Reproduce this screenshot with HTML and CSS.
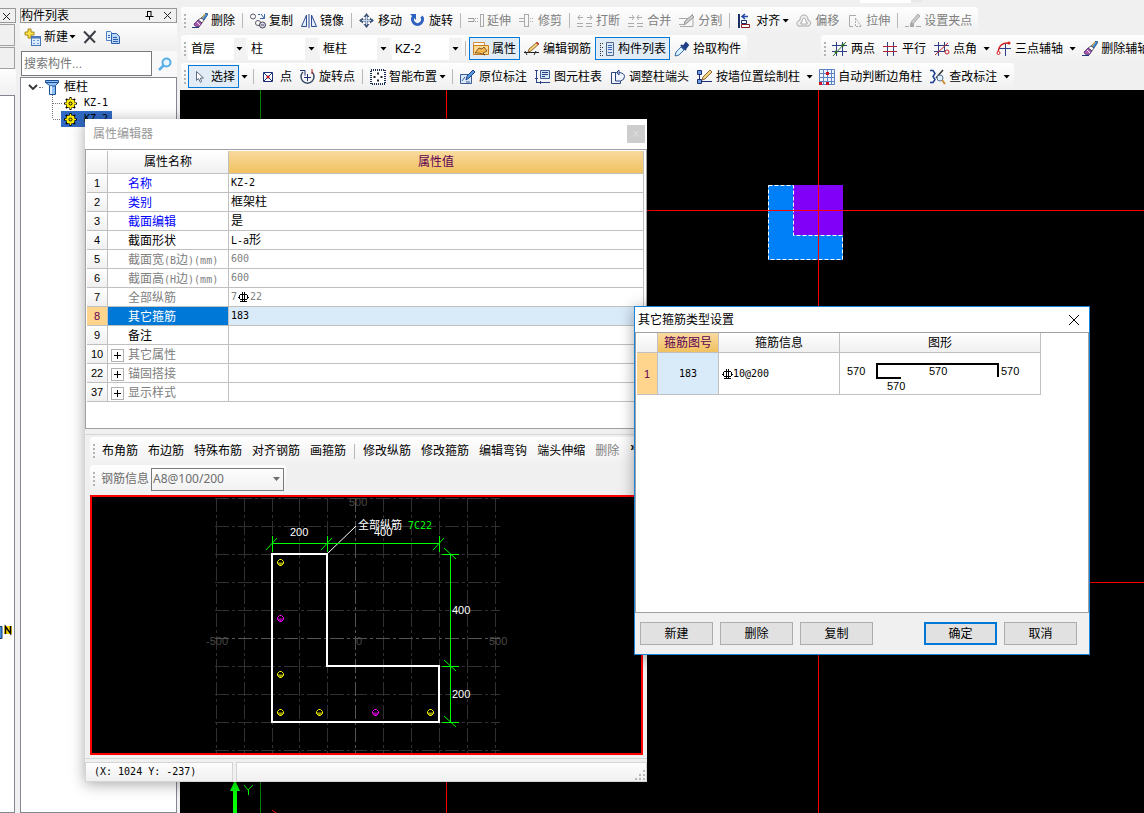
FILE: index.html
```html
<!DOCTYPE html>
<html lang="zh-CN">
<head>
    <meta charset="UTF-8">
    <meta name="viewport" content="width=device-width, initial-scale=1.0">
    <title>构件列表</title>
    <link rel="stylesheet" href="styles.css">
</head>
<body>

<!-- Shared symbols -->
<svg class="defs" aria-hidden="true">
    <!-- Steel grade mark, used in the tables -->
    <symbol id="steel" viewBox="0 0 11 11">
        <path d="M4.500 0v10M6.500 0v10M2 2.500h7M2 7.500h7M1.500 3v4M9.500 3v4M0 5.500h2M9 5.500h2M2 9.500h7" fill="none" stroke="#000"/>
    </symbol>
    <symbol id="brush" viewBox="0 0 16 16">
        <path d="M14 0l2 1-4 6-3-2z" fill="#3f8fd8" stroke="#1d3f7a" stroke-width=".8"/>
        <path d="M13 1l-3 4" stroke="#f0b040" stroke-width="1.200"/>
        <path d="M9 5l3 2-2 3-4-3z" fill="#fff" stroke="#444" stroke-width=".8"/>
        <path d="M6 7l4 3-3 4-4-1-1-2z" fill="#a85ab0" stroke="#4b2a66" stroke-width=".8"/>
        <path d="M5 9l3 3" stroke="#fff"/>
        <path d="M0 14.500h7" stroke="#223a7a"/>
    </symbol>
    <symbol id="gear" viewBox="0 0 13 13">
        <path d="M6.500 0v13M0 6.500h13M2 2l9 9M11 2l-9 9" stroke="#000" stroke-width="2"/>
        <circle cx="6.500" cy="6.500" r="4.500" fill="#ffee00" stroke="#000" stroke-width=".6"/>
        <path d="M6.500 1v11M1 6.500h11M3 3l7 7M10 3l-7 7" stroke="#ffee00"/>
        <circle cx="6.500" cy="6.500" r="1.500" fill="#ffee00" stroke="#000"/>
    </symbol>
    <symbol id="rebar" viewBox="0 0 7 7">
        <path d="M2.500.5h2l2 2v2l-2 2h-2l-2-2v-2z" fill="#000" stroke="currentColor"/>
        <path d="M1 3.500h5v1l-2 2H3l-2-2z" fill="currentColor" opacity=".6"/>
    </symbol>
</svg>

<div class="app">

    <!-- Left dock, only its right edge is visible -->
    <div class="side">
        <div class="side-title">
            <svg width="9" height="9" viewBox="0 0 9 9"><path d="M1 1l7 7M8 1L1 8" stroke="#222"/></svg>
        </div>
        <div class="side-tab"></div>
        <div class="side-tab"></div>
        <div class="side-tools"></div>
        <div class="side-body">
            <svg width="13" height="16" viewBox="0 0 13 16">
                <path d="M0 2.500h2v12h-2" fill="#3d8ee0" stroke="#223a5c"/>
                <rect x="4" y="2" width="8" height="8" fill="#ffd800"/>
                <path d="M5.500 10V2.500l5 7V2" fill="none" stroke="#000" stroke-width="1.500"/>
            </svg>
        </div>
    </div>

    <!-- Component list -->
    <div class="list">
        <div class="list-title">
            <span>构件列表</span>
            <svg width="9" height="9" viewBox="0 0 9 9"><path d="M2.500 0v5M6 0v5M2 .5h4M0.500 5.500h8M4.500 5v4" fill="none" stroke="#000"/></svg>
            <svg width="9" height="9" viewBox="0 0 9 9"><path d="M1 1l7 7M8 1L1 8" stroke="#222"/></svg>
        </div>
        <div class="list-tools">
            <button class="tool">
                <svg width="18" height="18" viewBox="0 0 18 18">
                    <path d="M4 1h3v3h3v3H7v3H4V7H1V4h3z" fill="#ffe14a" stroke="#927400" stroke-width=".8"/>
                    <rect x="7.500" y="8.500" width="9" height="9" fill="#dcebfc" stroke="#4876b8"/>
                    <path d="M8 9.500h8" stroke="#4876b8" stroke-width="2"/>
                    <path d="M9 12.500h2m2 0h2M9 15.500h2m2 0h2" stroke="#6d9bd6"/>
                </svg>
                <span>新建</span><i class="arrow"></i>
            </button>
            <button class="tool" aria-label="删除">
                <svg width="14" height="14" viewBox="0 0 14 14"><path d="M1 1.500l11 11M12.500 1L1.500 13" stroke="#3b3f45" stroke-width="2"/></svg>
            </button>
            <button class="tool" aria-label="复制">
                <svg width="16" height="14" viewBox="0 0 16 14">
                    <path d="M1.500 1.500h4l2 2v7h-6z" fill="#e2effd" stroke="#4d7fc4"/>
                    <path d="M6.500 3.500h5l3 3v7h-8z" fill="#b9d6f7" stroke="#2c5fae"/>
                    <path d="M8 7.500h4M8 9.500h5M8 11.500h5M3 5.500h2M3 7.500h2" stroke="#2c5fae"/>
                </svg>
            </button>
        </div>
        <div class="search">
            <input type="text" placeholder="搜索构件..." aria-label="搜索构件">
            <button aria-label="搜索">
                <svg width="14" height="14" viewBox="0 0 14 14"><circle cx="8.500" cy="5.500" r="4" fill="#e6f5ff" stroke="#58aee6" stroke-width="2"/><path d="M5.500 8.500L1 13" stroke="#58aee6" stroke-width="2.500"/></svg>
            </button>
        </div>
        <ul class="tree">
            <li class="root">
                <svg width="10" height="7" viewBox="0 0 10 7"><path d="M1 1l4 4 4-4" fill="none" stroke="#333" stroke-width="1.800"/></svg>
                <i class="dots"></i>
                <svg width="14" height="16" viewBox="0 0 14 16">
                    <path d="M.5 1.500h13v2l-3 3v9h-6v-9l-4-3z" fill="#8dc0f5" stroke="#1d4f96"/>
                    <path d="M.5 3.500h13M5 7h5" stroke="#1d4f96"/>
                    <path d="M6 7v8" stroke="#fff" stroke-width="1.500"/>
                </svg>
                <span>框柱</span>
            </li>
            <li class="leaf">
                <svg class="branch" width="11" height="16" viewBox="0 0 11 16"><path d="M.5 0v16M1 8.500h10" stroke="#777" stroke-dasharray="1 1"/></svg>
                <svg width="13" height="13"><use href="#gear"/></svg>
                <span>KZ-1</span>
            </li>
            <li class="leaf selected">
                <svg class="branch" width="11" height="16" viewBox="0 0 11 16"><path d="M.5 0v8M1 8.500h10" stroke="#777" stroke-dasharray="1 1"/></svg>
                <svg width="13" height="13"><use href="#gear"/></svg>
                <span>KZ-2</span>
            </li>
        </ul>
    </div>

    <div class="work">
        <div class="bars">
            <div class="bar-edge"><i></i><b></b></div>

            <!-- Edit toolbar -->
            <div class="bar-row">
                <div class="toolbar">
                    <i class="grip"></i>
                    <button class="tool"><svg class="ico"><use href="#brush"/></svg>删除</button>
                    <i class="sep"></i>
                    <button class="tool">
                        <svg class="ico" viewBox="0 0 16 16"><circle cx="3" cy="3.500" r="2.500" fill="#fff" stroke="#556"/><path d="M8 1.500h2M11 1l3 4M14.500 1v4.500H10" fill="none" stroke="#3b62a8"/><circle cx="8" cy="10" r="2.500" fill="#fff" stroke="#556"/><circle cx="12.500" cy="12" r="3" fill="#dde" stroke="#445"/><path d="M11 12h3" stroke="#445"/></svg>复制</button>
                    <button class="tool">
                        <svg class="ico" viewBox="0 0 16 16"><path d="M5.500 2v11.500h-5zM10.500 2v11.500h5z" fill="#e6eefb" stroke="#2f4f95"/><path d="M8 1v14" stroke="#2f4f95"/></svg>镜像</button>
                    <i class="sep"></i>
                    <button class="tool">
                        <svg class="ico" viewBox="0 0 16 16"><path d="M7.500 2v12M1 7.500h13" stroke="#40577a" stroke-width="2"/><path d="M4.500 4l3-4 3 4zM4.500 11l3 4 3-4zM4 4.500l-4 3 4 3zM11 4.500l4 3-4 3z" fill="#40577a"/><path d="M7.500 3v9M3 7.500h9" stroke="#c7d9ef"/></svg>移动</button>
                    <button class="tool">
                        <svg class="ico" viewBox="0 0 16 16"><path d="M3.500 3.500a5 5 0 1 0 8 0" fill="none" stroke="#2f62c0" stroke-width="3"/><path d="M0 1h6v6z" fill="#2f62c0"/></svg>旋转</button>
                    <i class="sep"></i>
                    <button class="tool" disabled>
                        <svg class="ico" viewBox="0 0 16 16"><path d="M0 5.500h6v3H0" fill="none" stroke="#999"/><path d="M7 5.500h4M7 8.500h4" stroke="#aaa" stroke-dasharray="1 1"/><path d="M12.500 1v12M15.500 1v12M12 1.500h4M12 13.500h4" stroke="#aaa"/></svg>延伸</button>
                    <button class="tool" disabled>
                        <svg class="ico" viewBox="0 0 16 16"><path d="M0 5.500h5M0 8.500h5M5.500 1v13M9.500 1v13M6 1.500h4M6 13.500h4" stroke="#aaa"/><path d="M11 5.500h4M11 8.500h4" stroke="#aaa" stroke-dasharray="1 1"/></svg>修剪</button>
                    <i class="sep"></i>
                    <button class="tool" disabled>
                        <svg class="ico" viewBox="0 0 16 16"><path d="M0 10.500h6M0 13.500h6M9 10.500h6M9 13.500h6M1 4.500h5M10 4.500h5M3 2L1 4.500 3 7M13 2l2 2.500L13 7" fill="none" stroke="#aaa"/></svg>打断</button>
                    <button class="tool" disabled>
                        <svg class="ico" viewBox="0 0 16 16"><path d="M0 10.500h6M0 13.500h6M9 10.500h6M9 13.500h6M1 4.500h5M9 4.500h5M4 2l2 2.500L4 7M11 2L9 4.500 11 7" fill="none" stroke="#aaa"/></svg>合并</button>
                    <button class="tool" disabled>
                        <svg class="ico" viewBox="0 0 16 16"><path d="M0 5.500h9M0 11.500h5M1 13.500h13v-8M5 10l9-9" fill="none" stroke="#aaa"/><path d="M5 12l1-4 7-6 2 2-7 6z" fill="#ccc" stroke="#999"/></svg>分割</button>
                    <i class="sep"></i>
                    <button class="tool">
                        <svg class="ico" viewBox="0 0 16 16"><path d="M2 1v14" stroke="#1a2f66" stroke-width="2"/><path d="M11 3.500H5M8 1L5 3.500 8 6" fill="none" stroke="#2348a8" stroke-width="1.500"/><path d="M4.500 7.500h5v3h-5z" fill="#fff" stroke="#1a2f66"/><path d="M4.500 11.500h8v3h-8z" fill="#fff" stroke="#8d1a1a"/></svg>对齐<i class="arrow"></i></button>
                    <button class="tool" disabled>
                        <svg class="ico" viewBox="0 0 16 16"><path d="M2 13q-3-4 2-6 0-5 4-5t4 5q5 2 1 6z" fill="#eee" stroke="#aaa"/><path d="M5 11q-1-2 1-2 0-4 2-4t2 4q2 0 1 2z" fill="#fff" stroke="#aaa"/></svg>偏移</button>
                    <button class="tool" disabled>
                        <svg class="ico" viewBox="0 0 16 16"><path d="M9 2.500H2.500v11H6" fill="none" stroke="#aaa"/><path d="M8.500 5v8.500h6z" fill="none" stroke="#aaa" stroke-dasharray="2 1"/></svg>拉伸</button>
                    <i class="sep"></i>
                    <button class="tool" disabled>
                        <svg class="ico" viewBox="0 0 16 16"><path d="M0 13.500h4M11 13.500h5" stroke="#aaa"/><path d="M6 9l7-8 2 2-7 8z" fill="#ccc" stroke="#aaa"/><rect x="5" y="10" width="4" height="4" fill="#aaa"/></svg>设置夹点</button>
                </div>
            </div>

            <!-- Component selectors and auxiliary axes -->
            <div class="bar-row">
                <div class="toolbar">
                    <i class="grip"></i>
                    <div class="combos">
                        <label class="combo combo-floor"><select aria-label="楼层"><option>首层</option></select><i class="arrow"></i></label>
                        <label class="combo"><select aria-label="构件大类"><option>柱</option></select><i class="arrow"></i></label>
                        <label class="combo"><select aria-label="构件类型"><option>框柱</option></select><i class="arrow"></i></label>
                        <label class="combo"><select aria-label="构件名称"><option>KZ-2</option></select><i class="arrow"></i></label>
                    </div>
                    <i class="sep"></i>
                    <button class="tool checked">
                        <svg class="ico" viewBox="0 0 16 16"><path d="M.5 1.500h11v3h-11z" fill="#fff" stroke="#d98b3a"/><path d="M.5 4.500h15v9H.5z" fill="#ffd88f" stroke="#c87a1e"/><path d="M2 12l4-5 3 1 2-2 3 4-4 2 2 2-6-2z" fill="#f9b64a" stroke="#5a4520" stroke-width=".8"/></svg>属性</button>
                    <button class="tool">
                        <svg class="ico" viewBox="0 0 16 16"><path d="M0 11.500h15" stroke="#222"/><path d="M1 10l2 4M12 10l-2 4" stroke="#222"/><path d="M4 11l1-3 8-7 2 2-8 7z" fill="#f1d27a" stroke="#7a4d20" stroke-width=".8"/><path d="M12 2l1-1 2 2-1 1z" fill="#c33"/></svg>编辑钢筋</button>
                    <button class="tool checked">
                        <svg class="ico" viewBox="0 0 16 16"><path d="M1 2.500h4M1 6.500h4M1 10.500h4M1 14.500h4" stroke="#333" stroke-dasharray="1 1"/><path d="M1.500 2v12" stroke="#333" stroke-dasharray="1 1"/><path d="M7.500 1.500h7v13h-7z" fill="#d8e6f8" stroke="#52688c"/><path d="M9 4.500h4M9 6.500h4M9 8.500h4M9 11.500h4" stroke="#3e68b0"/></svg>构件列表</button>
                    <button class="tool">
                        <svg class="ico" viewBox="0 0 16 16"><path d="M1 15l1-4 5-5 3 3-5 5z" fill="#d8efff" stroke="#3a6ea8"/><path d="M7 4l5 5M9 6l3-4 2 2-3 4z" fill="#1f3f86" stroke="#1f3f86" stroke-width="2"/></svg>拾取构件</button>
                </div>
                <div class="toolbar axis-bar">
                    <i class="grip"></i>
                    <button class="tool">
                        <svg class="ico" viewBox="0 0 16 16"><path d="M4.500 1v14M10.500 1v14M0 4.500h15M0 10.500h15" stroke="#2d3f85"/><path d="M1 15L14 1" stroke="#3a7a2c"/><circle cx="4" cy="11" r="1.500" fill="#2f6e26"/><circle cx="11" cy="4" r="1.500" fill="#2f6e26"/></svg>两点</button>
                    <button class="tool">
                        <svg class="ico" viewBox="0 0 16 16"><path d="M4.500 1v14M10.500 1v14" stroke="#2d3f85"/><path d="M0 5.500h14M0 10.500h14" stroke="#b02030"/></svg>平行</button>
                    <button class="tool">
                        <svg class="ico" viewBox="0 0 16 16"><path d="M4.500 1v14M10.500 1v10M0 4.500h15M0 10.500h10" stroke="#2d3f85"/><path d="M1 14L14 2" stroke="#c02020"/><circle cx="13" cy="11" r="2" fill="none" stroke="#c02020"/></svg>点角</button>
                    <button class="drop" aria-label="点角选项"><i class="arrow"></i></button>
                    <button class="tool">
                        <svg class="ico" viewBox="0 0 16 16"><path d="M9.500 3v12M3 7.500h12" stroke="#2d3f85"/><path d="M13 2Q3 1 2 12" fill="none" stroke="#d02020" stroke-width="1.500"/><circle cx="2.500" cy="12" r="1.500" fill="#fff" stroke="#d02020"/><circle cx="13" cy="2" r="1.500" fill="#d02020"/></svg>三点辅轴</button>
                    <button class="drop" aria-label="三点辅轴选项"><i class="arrow"></i></button>
                    <button class="tool"><svg class="ico"><use href="#brush"/></svg>删除辅轴</button>
                </div>
            </div>

            <!-- Drawing toolbar -->
            <div class="bar-row">
                <div class="toolbar">
                    <i class="grip"></i>
                    <button class="tool checked">
                        <svg class="ico" viewBox="0 0 16 16"><path d="M4.500 2.500v9l2-2 2 4 1-1-1-3.500h3z" fill="#fff" stroke="#5a6a80"/></svg>选择</button>
                    <button class="drop" aria-label="选择选项"><i class="arrow"></i></button>
                    <i class="sep"></i>
                    <button class="tool">
                        <svg class="ico" viewBox="0 0 16 16"><path d="M2.500 3.500h9v9h-9z" fill="#fff" stroke="#1c2f73"/><path d="M3 4l8 8M11 4l-8 8" stroke="#1c2f73"/><path d="M5.500 8h3M7 6.500v3" stroke="#d01020" stroke-width="1.500"/></svg>点</button>
                    <button class="tool">
                        <svg class="ico" viewBox="0 0 16 16"><path d="M3 3a6.500 6.500 0 1 0 9 0" fill="none" stroke="#3a4a66" stroke-width="1.500"/><path d="M0 1.500h5v5M7.500 5v7M4 8.500h7" fill="none" stroke="#1c2f73"/><path d="M12 0v5" stroke="#c02020"/></svg>旋转点</button>
                    <i class="sep"></i>
                    <button class="tool">
                        <svg class="ico" viewBox="0 0 16 16"><path d="M1 1h14v14H1z" fill="#fff" stroke="#1c2f53" stroke-dasharray="1 1" stroke-width="2"/><path d="M8 3v3M8 10v3M3 8h3M10 8h3M7 4.500h2M7 11.500h2M4.500 7v2M11.500 7v2" stroke="#223"/></svg>智能布置<i class="arrow"></i></button>
                    <i class="sep"></i>
                    <button class="tool">
                        <svg class="ico" viewBox="0 0 16 16"><path d="M.5 5.500h11v9H.5z" fill="#dbe9fa" stroke="#3c5c94"/><path d="M2 12l3-4M6 13h4" stroke="#3c5c94"/><path d="M6 11l1-4 6-6 2 2-6 6z" fill="#5a98dc" stroke="#1f4486"/></svg>原位标注</button>
                    <button class="tool">
                        <svg class="ico" viewBox="0 0 16 16"><path d="M5.500 1.500h9v8h-9z" fill="#d6e6fb" stroke="#3c5c94"/><path d="M7 3.500h6M7 5.500h6M7 7.500h3M1.500 1v12M0 1.500h3M0 9.500h3M1 13.500h14M5.500 12v3" stroke="#2a4482"/></svg>图元柱表</button>
                    <button class="tool">
                        <svg class="ico" viewBox="0 0 16 16"><path d="M8 3.500H1.500v11h9v-3" fill="none" stroke="#2a4482"/><path d="M5.500 3v9h5q4-1 4-4.500T9 3.500M9 1v5L6.500 3.500z" fill="#eef4fc" stroke="#2a4482"/></svg>调整柱端头</button>
                    <button class="tool">
                        <svg class="ico" viewBox="0 0 16 16"><path d="M.5 1.500h4v4h-4zM.5 10.500h4v4h-4z" fill="#6b9de0" stroke="#1c2f73"/><path d="M2.500 6v4M5 12.500h10" stroke="#1c2f73"/><path d="M5 11l1-3 7-7 2 2-7 7z" fill="#f1d27a" stroke="#7a4d20" stroke-width=".8"/></svg>按墙位置绘制柱</button>
                    <button class="drop" aria-label="绘制柱选项"><i class="arrow"></i></button>
                    <button class="tool">
                        <svg class="ico" viewBox="0 0 16 16"><path d="M.5.500h15v15H.5z" fill="#eef4ff" stroke="#5d83c4"/><path d="M4.500 0v16M8.500 0v16M12.500 0v16M0 4.500h16M0 8.500h16M0 12.500h16" stroke="#5d83c4"/><path d="M7 3h3v3H7zM0 13h3v3H0zM7 13h3v3H7z" fill="#d01020"/></svg>自动判断边角柱</button>
                    <button class="tool">
                        <svg class="ico" viewBox="0 0 16 16"><path d="M0 1.500h3l2 3-2 3 2 3-2 3H0" fill="none" stroke="#1c3f93" stroke-width="1.500"/><path d="M13 1L6 9" stroke="#333" stroke-width="1.500"/><circle cx="10" cy="9" r="3" fill="#dff0ff" stroke="#54708f"/><path d="M12 11l3 4" stroke="#c98a35" stroke-width="2"/></svg>查改标注</button>
                    <button class="drop" aria-label="查改标注选项"><i class="arrow"></i></button>
                </div>
            </div>
        </div>

        <!-- Model view -->
        <div class="canvas">
            <svg width="100%" height="100%">
                <rect x="588" y="95" width="75" height="75" fill="#0080f8"/>
                <rect x="613" y="95" width="50" height="50" fill="#8000f8"/>
                <path d="M588.500 95.500h25v50h49v24h-74z" fill="none" stroke="#fff" stroke-dasharray="4 2"/>
                <path d="M80.500 0v900" stroke="#008000"/>
                <path d="M266.500 0v900M638.500 0v900M0 120.500h4000M0 492.500h4000" stroke="#f00"/>
                <path d="M53 723v-22h-3l5-11 5 11h-3v22z" fill="#0f0"/>
                <path d="M64 695l4 5 5-5M68.500 700v5" fill="none" stroke="#0f0"/>
                <path d="M92 720l8 6" stroke="#f00"/>
            </svg>
        </div>
    </div>
</div>

<!-- Property editor -->
<section class="window editor">
    <div class="window-title">
        <span>属性编辑器</span>
        <button class="close-off" disabled aria-label="关闭">×</button>
    </div>

    <div class="grid-box">
        <table class="grid props">
            <thead>
                <tr><th class="num"></th><th class="name">属性名称</th><th class="hot">属性值</th></tr>
            </thead>
            <tbody>
                <tr><th>1</th><td class="key">名称</td><td class="mono">KZ-2</td></tr>
                <tr><th>2</th><td class="key">类别</td><td>框架柱</td></tr>
                <tr><th>3</th><td class="key">截面编辑</td><td>是</td></tr>
                <tr><th>4</th><td>截面形状</td><td><span class="mono">L-a</span>形</td></tr>
                <tr class="off"><th>5</th><td>截面宽<span class="mono">(B</span>边<span class="mono">)(mm)</span></td><td class="mono">600</td></tr>
                <tr class="off"><th>6</th><td>截面高<span class="mono">(H</span>边<span class="mono">)(mm)</span></td><td class="mono">600</td></tr>
                <tr class="off"><th>7</th><td>全部纵筋</td><td class="mono">7<svg class="steel"><use href="#steel"/></svg>22</td></tr>
                <tr class="current"><th>8</th><td>其它箍筋</td><td class="mono">183</td></tr>
                <tr><th>9</th><td>备注</td><td></td></tr>
                <tr class="off group"><th>10</th><td><button class="plus" aria-label="展开"></button>其它属性</td><td></td></tr>
                <tr class="off group"><th>22</th><td><button class="plus" aria-label="展开"></button>锚固搭接</td><td></td></tr>
                <tr class="off group"><th>37</th><td><button class="plus" aria-label="展开"></button>显示样式</td><td></td></tr>
            </tbody>
        </table>
    </div>

    <div class="section">
        <div class="toolbar rebar-bar">
            <i class="grip"></i>
            <button class="tool">布角筋</button>
            <button class="tool">布边筋</button>
            <button class="tool">特殊布筋</button>
            <button class="tool">对齐钢筋</button>
            <button class="tool">画箍筋</button>
            <i class="sep"></i>
            <button class="tool">修改纵筋</button>
            <button class="tool">修改箍筋</button>
            <button class="tool">编辑弯钩</button>
            <button class="tool">端头伸缩</button>
            <button class="tool" disabled>删除</button>
            <button class="more" aria-label="更多">»</button>
        </div>
        <div class="toolbar info-bar">
            <i class="grip"></i>
            <label for="rebar-info">钢筋信息</label>
            <div class="rebar-info">
                <select id="rebar-info" disabled><option>A8@100/200</option></select>
                <i class="arrow"></i>
            </div>
        </div>

        <div class="drawing">
            <svg width="549" height="256" viewBox="0 0 549 256">
                <g stroke="#303030" stroke-dasharray="14 3 3 3" fill="none">
                    <path d="M124.500 1v255M152.500 1v255M180.500 1v255M207.500 1v255M235.500 1v255M291.500 1v255M319.500 1v255M347.500 1v255M375.500 1v255M403.500 1v255"/>
                    <path d="M123 1.500h285M123 29.500h285M123 57.500h285M123 85.500h285M123 113.500h285M123 169.500h285M123 197.500h285M123 225.500h285M123 253.500h285"/>
                    <path d="M263.500 1v255M123 141.500h285" stroke="#555"/>
                </g>
                <g fill="#484848">
                    <text x="257" y="9">500</text>
                    <text x="114" y="148">-500</text>
                    <text x="264" y="148">0</text>
                    <text x="397" y="148">500</text>
                </g>
                <path d="M180 57h55v112h112v56H180z" fill="none" stroke="#fff" stroke-width="2"/>
                <path d="M235 57l29-28" stroke="#fff"/>
                <g stroke="#0f0" fill="none">
                    <path d="M180 46.500h168M180.500 39v16M235.500 39v16M347.500 39v16"/>
                    <path d="M174 53l11-12M229 53l11-12M341 53l11-12"/>
                    <path d="M358.500 57v168M350 57.500h17M350 169.500h17M350 225.500h17"/>
                    <path d="M352 51l12 11M352 163l12 11M352 219l12 11"/>
                </g>
                <g fill="#fff">
                    <text x="198" y="39">200</text>
                    <text x="282" y="39">400</text>
                    <text x="360" y="117">400</text>
                    <text x="360" y="201">200</text>
                    <text x="266" y="32">全部纵筋</text>
                </g>
                <text x="316" y="32" fill="#0f0" class="rebar-count">7C22</text>
                <g color="#ff0">
                    <use href="#rebar" x="185" y="62" width="7" height="7"/>
                    <use href="#rebar" x="185" y="174" width="7" height="7"/>
                    <use href="#rebar" x="185" y="212" width="7" height="7"/>
                    <use href="#rebar" x="224" y="212" width="7" height="7"/>
                    <use href="#rebar" x="335" y="212" width="7" height="7"/>
                </g>
                <g color="#f0f">
                    <use href="#rebar" x="185" y="118" width="7" height="7"/>
                    <use href="#rebar" x="280" y="212" width="7" height="7"/>
                </g>
            </svg>
        </div>
    </div>

    <div class="status">
        <div class="coords mono">(X: 1024 Y: -237)</div>
        <div class="status-rest">
            <svg width="12" height="12" viewBox="0 0 12 12"><path d="M9 1h2v2H9zM9 5h2v2H9zM5 5h2v2H5zM9 9h2v2H9zM5 9h2v2H5zM1 9h2v2H1z" fill="#b8b8b8"/></svg>
        </div>
    </div>
</section>

<!-- Stirrup type dialog -->
<section class="window dialog">
    <div class="window-title">
        <span>其它箍筋类型设置</span>
        <button class="close" aria-label="关闭">
            <svg width="12" height="12" viewBox="0 0 12 12"><path d="M1 1l10 10M11 1L1 11" stroke="#000"/></svg>
        </button>
    </div>
    <div class="grid-box">
        <table class="grid stirrups">
            <thead>
                <tr><th class="num"></th><th class="hot id">箍筋图号</th><th class="info">箍筋信息</th><th class="shape">图形</th></tr>
            </thead>
            <tbody>
                <tr class="current">
                    <th>1</th>
                    <td class="mono id">183</td>
                    <td class="mono"><svg class="steel"><use href="#steel"/></svg>10@200</td>
                    <td class="shape">
                        <svg width="200" height="41" viewBox="0 0 200 41">
                            <path d="M61 25H37V11h121v13" fill="none" stroke="#000" stroke-width="2"/>
                            <text x="7" y="22">570</text>
                            <text x="89" y="22">570</text>
                            <text x="161" y="22">570</text>
                            <text x="47" y="37">570</text>
                        </svg>
                    </td>
                </tr>
            </tbody>
        </table>
    </div>
    <div class="buttons">
        <button>新建</button>
        <button>删除</button>
        <button>复制</button>
        <button class="ok">确定</button>
        <button>取消</button>
    </div>
</section>

</body>
</html>
```
FILE: styles.css
```css
* {
    box-sizing: border-box;
}

body {
    margin: 0;
    height: 100vh;
    overflow: hidden;
    position: relative; /* windows float over the app */
    background: #f0f0f0;
    color: #000;
    font: 12px/16px "Liberation Sans", "Noto Sans CJK SC", sans-serif;
}

button, input, select {
    font: inherit;
    color: inherit;
    margin: 0;
    padding: 0;
    border: 0;
    border-radius: 0;
    background: none;
}

svg {
    display: block;
    flex: none;
}

.defs {
    position: absolute;
    width: 0;
    height: 0;
}

.mono {
    font-family: "DejaVu Sans Mono", monospace;
    font-size: 10px;
}

.app {
    display: flex;
    height: 100%;
}

/* Left dock */
.side {
    display: flex;
    flex-direction: column;
    width: 16px;
    margin-right: 4px;
    padding-top: 8px;
}

.side-title {
    height: 15px;
    padding: 3px 0 0 2px;
    border: 1px solid #999;
    border-left: 0;
}

.side-tab {
    height: 22px;
    margin-right: 1px;
    margin-top: 1px;
    border: 1px solid #a0a0a0;
    border-left: 0;
}

.side-tools {
    height: 26px;
    background: linear-gradient(#fefefe, #f0f0f0);
}

.side-body {
    flex: 1;
    margin-right: 1px;
    padding-top: 528px;
    background: #fff;
    border: 1px solid #828790;
    border-left: 0;
}

/* Component list */
.list {
    display: flex;
    flex-direction: column;
    width: 157px;
    margin-right: 3px;
    padding-top: 8px;
}

.list-title {
    display: flex;
    align-items: center;
    gap: 9px;
    height: 15px;
    padding-right: 4px;
    border: 1px solid #999;
}

.list-title span {
    flex: 1;
}

.list-tools {
    display: flex;
    align-items: center;
    height: 27px;
    background: linear-gradient(#fdfdfd, #efefef);
}

.list-tools .tool {
    gap: 2px;
}

.search {
    display: flex;
    height: 26px;
    margin: 1px 0 0 1px;
}

.search input {
    width: 131px;
    height: 25px;
    padding: 0 2px;
    border: 1px solid #7a7a7a;
    background: #fff;
}

.search input::placeholder {
    color: #757575;
}

.search button {
    flex: 1;
    display: flex;
    align-items: center;
    justify-content: center;
    background: #f8f8f8;
}

.tree {
    flex: 1;
    margin: 0;
    padding: 1px 0 0 7px;
    list-style: none;
    background: #fff;
    border: 1px solid #828790;
}

.tree li {
    display: flex;
    align-items: center;
    height: 16px;
    white-space: nowrap;
}

.tree .dots {
    width: 4px;
    margin: 0 2px 0 1px;
    border-top: 1px dotted #777;
}

.tree .root span {
    margin-left: 5px;
}

.tree .branch {
    margin: 0 1px 0 24px;
}

.tree .leaf span {
    padding-left: 7px;
    font: 10px/16px "DejaVu Sans Mono", monospace;
}

.tree .selected {
    width: 84px;
    background: linear-gradient(90deg, #fff 33px, #316ac5 33px);
}

/* Toolbars */
.work {
    flex: 1;
    min-width: 0;
    display: flex;
    flex-direction: column;
}

.bars {
    overflow: hidden;
}

.bar-edge {
    display: flex;
    height: 6px;
    padding-left: 680px;
}

.bar-edge i {
    width: 51px;
    height: 3px;
    background: #fff;
}

.bar-edge b {
    width: 11px;
    height: 2px;
    background: #e8e8e8;
}

.bar-row {
    display: flex;
    height: 28px;
    padding: 1px 0 0 1px;
}

.toolbar {
    display: flex;
    flex: none;
    align-items: center;
    height: 27px;
    padding-right: 2px;
    border-radius: 3px;
    background: linear-gradient(#fefefe, #f0f0f0);
}

.axis-bar {
    margin-left: 74px;
}

.grip {
    width: 2px;
    height: 14px;
    margin: 0 2px 0 3px;
    background: repeating-linear-gradient(#b4b4b4 0 2px, transparent 2px 4px);
}

.sep {
    width: 1px;
    height: 15px;
    margin: 0 3px;
    background: #b8b8b8;
}

.tool {
    display: flex;
    flex: none;
    align-items: center;
    gap: 3px;
    height: 23px;
    padding: 0 4px;
    white-space: nowrap;
}

.tool:disabled {
    color: #808080;
}

.checked {
    background: #e1ecf7;
    box-shadow: inset 0 0 0 1px #0078d7;
}

.ico {
    width: 16px;
    height: 16px;
}

.arrow {
    flex: none;
    width: 7px;
    height: 4px;
    margin: 0 -1px;
    background: #000;
    clip-path: polygon(0 0, 100% 0, 50% 100%);
}

.drop {
    display: flex;
    align-items: center;
    justify-content: center;
    width: 11px;
    height: 23px;
}

.combos {
    display: flex;
    gap: 2px;
}

.combo {
    display: flex;
    align-items: center;
    width: 70px;
    height: 22px;
    padding-right: 4px;
    background: linear-gradient(90deg, #fff 57px, #f2f2f2 57px);
}

.combo-floor {
    width: 58px;
    background: linear-gradient(90deg, #fff 46px, #f2f2f2 46px);
}

.combo select {
    flex: 1;
    min-width: 0;
    padding-left: 3px;
    appearance: none;
}

.canvas {
    flex: 1;
    min-height: 0;
    overflow: hidden;
    background: #000;
}

/* Floating windows */
.window {
    position: absolute;
    display: flex;
    flex-direction: column;
    background: #f0f0f0;
}

.window-title {
    display: flex;
    align-items: center;
    justify-content: space-between;
    background: #fff;
}

.editor {
    left: 85px;
    top: 119px;
    width: 562px;
    box-shadow: 0 2px 14px rgba(0, 0, 0, 0.35);
}

.editor .window-title {
    height: 30px;
    padding: 0 2px 0 8px;
    color: #999;
}

.close-off {
    width: 18px;
    height: 18px;
    background: #cdcdcd;
    color: #dedede;
}

.grid-box {
    background: #fff;
    border: 1px solid #a0a0a5;
}

.editor .grid-box {
    min-height: 280px;
    padding: 1px;
}

/* Data grids */
.grid {
    border-collapse: separate;
    border-spacing: 0;
    table-layout: fixed;
}

.grid th,
.grid td {
    padding: 0;
    border: solid #c0c0c0;
    border-width: 0 1px 1px 0;
    line-height: 16px;
    font-weight: normal;
    white-space: nowrap;
}

.grid th {
    background: linear-gradient(#fff, #f0f0f0);
}

.grid tbody th {
    font-size: 11px;
}

.grid td {
    text-align: left;
}

.grid span.mono {
    line-height: 10px;
}

.grid .num {
    width: 21px;
}

.grid .hot {
    background: linear-gradient(#f9d99f, #f1c15f);
    color: #5b0053;
}

.grid .current th {
    background: #ffd58d;
    color: #5b0053;
}

.props {
    width: 557px;
}

.props thead th {
    height: 23px;
}

.props .name {
    width: 121px;
}

.props tbody td,
.props tbody th {
    height: 19px;
}

.props td:nth-child(2) {
    padding: 2px 0 0 20px;
}

.props td:nth-child(3) {
    padding-left: 2px;
}

.props .group td:nth-child(2) {
    padding-left: 3px;
}

.props .key {
    color: #00f;
}

.props .off td {
    color: #808080;
}

.props .current td {
    background: #d9eaf9;
}

.props .current td:nth-child(2) {
    background: #0078d7;
    color: #fff;
}

.plus {
    width: 13px;
    height: 13px;
    margin-right: 4px;
    border: 1px solid #b0b0b0;
    vertical-align: -2px;
    background:
        linear-gradient(#000, #000) center / 7px 1px no-repeat,
        linear-gradient(#000, #000) center / 1px 7px no-repeat;
}

.steel {
    display: inline-block;
    width: 11px;
    height: 11px;
    vertical-align: -3px;
}

.props .steel {
    margin: 0 1px;
}

/* Section editor */
.section {
    margin-top: 5px;
    padding: 2px 4px 3px 5px;
    border: solid #d5d5d5;
    border-width: 1px 0;
}

.section .toolbar {
    height: 28px;
}

.section .tool {
    padding: 0 5px;
}

.info-bar .grip {
    margin-right: 5px;
}

.rebar-bar .more {
    margin: 0 4px 8px auto;
    font-weight: bold;
}

.info-bar {
    width: 196px;
    color: #6d6d6d;
}

.info-bar label {
    padding-left: 1px;
}

.rebar-info {
    display: flex;
    align-items: center;
    width: 133px;
    height: 23px;
    margin-left: 2px;
    padding-right: 4px;
    border: 1px solid #7a7a7a;
}

.rebar-info select {
    flex: 1;
    padding-left: 1px;
    appearance: none;
    color: #6d6d6d;
    font-family: "Noto Sans", sans-serif;
    opacity: 1;
}

.rebar-info .arrow {
    background: #6d6d6d;
}

.drawing {
    margin-top: 2px;
    border: 2px solid #f00;
    background: #000;
    overflow: hidden;
}

.drawing text,
.shape text {
    font-size: 11px;
}

.drawing .rebar-count {
    font: 10px "DejaVu Sans Mono", monospace;
}

.status {
    display: flex;
    gap: 3px;
    margin-top: 3px;
}

.status div {
    height: 20px;
    border: 1px solid #d5d5d5;
    background: linear-gradient(#fdfdfd, #f0f0f0);
}

.status .coords {
    width: 148px;
    padding-left: 8px;
    line-height: 18px;
}

.status .status-rest {
    flex: 1;
    display: flex;
    align-items: flex-end;
    justify-content: flex-end;
}

/* Stirrup dialog */
.dialog {
    left: 634px;
    top: 306px;
    width: 456px;
    border: 1px solid #1883d7;
    box-shadow: 0 2px 14px rgba(0, 0, 0, 0.35);
}

.dialog .window-title {
    height: 25px;
    padding: 0 8px 0 3px;
}

.close {
    padding: 1px;
}

.dialog .grid-box {
    height: 281px;
    padding: 0 1px;
}

.stirrups {
    width: 404px;
}

.stirrups thead th {
    height: 20px;
}

.stirrups tbody td {
    height: 42px;
}

.stirrups th.id {
    width: 61px;
}

.stirrups th.info {
    width: 121px;
}

.stirrups td.id {
    background: #d9eaf9;
    text-align: center;
}

.stirrups td:nth-child(3) {
    padding-left: 3px;
}

.buttons {
    display: flex;
    align-items: center;
    gap: 7px;
    height: 41px;
    padding: 0 12px 0 5px;
}

.buttons button {
    width: 73px;
    height: 23px;
    border: 1px solid #adadad;
    background: #e1e1e1;
}

.buttons .ok {
    margin-left: auto;
    border: 2px solid #0078d7;
}
```
